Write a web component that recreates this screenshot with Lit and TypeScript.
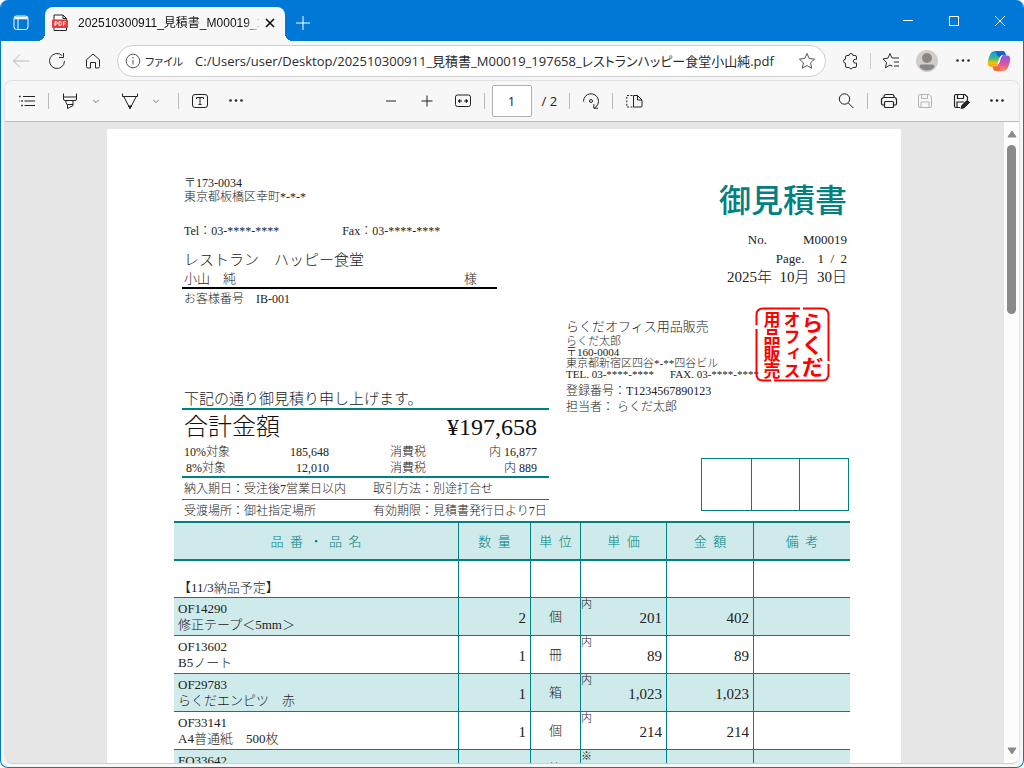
import { LitElement, html, css, svg, nothing } from "lit";
import { customElement, property } from "lit/decorators.js";

type Row = {
  code: string;
  name: string;
  qty: string;
  unit: string;
  mark: string;
  price: string;
  amount: string;
};

const ROWS: Row[] = [
  { code: "", name: "【11/3納品予定】", qty: "", unit: "", mark: "", price: "", amount: "" },
  { code: "OF14290", name: "修正テープ＜5mm＞", qty: "2", unit: "個", mark: "内", price: "201", amount: "402" },
  { code: "OF13602", name: "B5ノート", qty: "1", unit: "冊", mark: "内", price: "89", amount: "89" },
  { code: "OF29783", name: "らくだエンピツ　赤", qty: "1", unit: "箱", mark: "内", price: "1,023", amount: "1,023" },
  { code: "OF33141", name: "A4普通紙　500枚", qty: "1", unit: "個", mark: "内", price: "214", amount: "214" },
  { code: "FO33642", name: "", qty: "", unit: "箱", mark: "※", price: "", amount: "" },
];

const ICONS: Record<string, unknown> = {
  workspace: svg`<rect x="3" y="3" width="14" height="13.500" rx="2.500"/><path d="M7 6v10.500"/><path d="M3.500 5h13" stroke-width="2.500"/>`,
  plus: svg`<path d="M10 3v14M3 10h14"/>`,
  close: svg`<path d="M6 6l8 8M14 6l-8 8" stroke-width="1.600"/>`,
  winMin: svg`<path d="M5 9.500h10"/>`,
  winMax: svg`<rect x="5.500" y="5.500" width="9" height="9"/>`,
  winClose: svg`<path d="M5 5l10 10M15 5L5 15"/>`,
  back: svg`<path d="M18 10H2.500M9 3.500L2.500 10l6.500 6.500"/>`,
  reload: svg`<path d="M17.500 10a7.500 7.500 0 1 1-2.300-5.400"/><path d="M16.500 2v4.500H12"/>`,
  home: svg`<path d="M3.500 8.700L10 3l6.500 5.700v6.800a1.500 1.500 0 0 1-1.500 1.500h-2.500v-5.500h-5V17H5a1.500 1.500 0 0 1-1.500-1.500z"/>`,
  info: svg`<circle cx="10" cy="10" r="6.800"/><path d="M10 9v4.500"/><path d="M10 6v1.500"/>`,
  star: svg`<path d="M10 2.500l2.200 5 5.400.6-4 3.700 1.100 5.400L10 14.500l-4.700 2.700 1.100-5.400-4-3.700 5.400-.6z"/>`,
  puzzle: svg`<path d="M7 4.500h2a2 2 0 0 1 4 0h2a1.500 1.500 0 0 1 1.500 1.500v2.300h-1.200a1.900 1.900 0 0 0 0 3.800h1.200v2.900a1.500 1.500 0 0 1-1.500 1.500h-2.200a1.900 1.900 0 0 1-3.600 0H7A1.500 1.500 0 0 1 5.500 15v-2.800a2 2 0 1 1 0-4V6A1.500 1.500 0 0 1 7 4.500z"/>`,
  favs: svg`<path d="M11.500 15.200L9 14l-4.500 2.800 1-5.300-3.500-3.600 5-.8L9 2.500l2 4.500h7"/><path d="M13 11h5M13 15h5"/>`,
  list: svg`<path d="M6 5.500h12M7.500 10H18M7.500 14.500H18" stroke-width="1.200"/><path d="M2 5.500h1.600M4.200 10h1.600M4.200 14.500h1.600M2 10h.5" stroke-width="1.600"/>`,
  highlighter: svg`<path d="M3.500 2.500v5.500q0 1.500 1.500 1.500h10q1.500 0 1.500-1.500V2.500M3.500 6h13M6 9.500v2.300L7.500 14v3.500L13 14.500V9.500M7.500 13.500H13"/>`,
  pen: svg`<path d="M2.500 2.500v3h15v-3M3.700 5.500L10 17.500l6.300-12"/><path d="M8.500 15h3L10 17.500z" fill="currentColor"/>`,
  chevron: svg`<path d="M6.500 8.500L10 12l3.500-3.500"/>`,
  textbox: svg`<rect x="2.500" y="3.500" width="15" height="13" rx="2.500"/><path d="M6.500 8V6.500h7V8M10 6.500v7M8.500 13.500h3"/>`,
  dots: svg`<g fill="currentColor" stroke="none"><circle cx="4.500" cy="9.500" r="1.300"/><circle cx="10" cy="9.500" r="1.300"/><circle cx="15.500" cy="9.500" r="1.300"/></g>`,
  minus: svg`<path d="M5 10h10" stroke-width="1.200"/>`,
  zoomIn: svg`<path d="M4.500 10h11M10 4.500v11"/>`,
  fit: svg`<rect x="2.500" y="4" width="15" height="11.500" rx="2"/><path d="M9 10H5.500M11 10h3.500"/><path d="M7 8L5 10l2 2zM13 8l2 2-2 2z" fill="currentColor" stroke-width=".5"/>`,
  rotate: svg`<path d="M2.500 10.500a7.500 7.500 0 1 1 10.800 6.500"/><path d="M17 17.200h-4.200v-4"/><circle cx="10" cy="10" r="1.500"/>`,
  pages: svg`<path d="M8.500 4.500H2.800v11.500h5.700" stroke-dasharray="2 1.500"/><path d="M9.500 4.500h4L18 9v6a1 1 0 0 1-1 1H9.500zM13.500 4.500V9H18"/>`,
  search: svg`<circle cx="8.500" cy="8" r="5.200"/><path d="M12.300 12l5 5"/>`,
  print: svg`<path d="M5 6.500v-1a2 2 0 0 1 2-2h6a2 2 0 0 1 2 2v1M5.500 14H4a1.500 1.500 0 0 1-1.500-1.500V9A2.500 2.500 0 0 1 5 6.500h10A2.500 2.500 0 0 1 17.500 9v3.500A1.500 1.500 0 0 1 16 14h-1.500" stroke-width="1.200"/><rect x="5.500" y="10.500" width="9" height="6" rx="1" stroke-width="1.200"/>`,
  save: svg`<path d="M3.500 5A1.500 1.500 0 0 1 5 3.500h9l2.500 2.500v9A1.500 1.500 0 0 1 15 16.500H5A1.500 1.500 0 0 1 3.500 15zM6.500 3.500V7.500h6V3.500M6 16.500V11h8v5.500"/>`,
  saveAs: svg`<path d="M9 16.500H5A1.500 1.500 0 0 1 3.500 15V5A1.500 1.500 0 0 1 5 3.500h9l2.500 2.500v3M6.500 3.500V7.500h6V3.500M6 16.500V11h7" stroke-width="1.200"/><path d="M10 17.500l.8-3 5.400-5.200 2.300 2.200-5.500 5.300z" fill="currentColor"/>`,
};

const icon = (name: string) => html`
  <svg class="icon" viewBox="0 0 20 20" width="20" height="20" aria-hidden="true"
    fill="none" stroke="currentColor" stroke-width="1">${ICONS[name]}</svg>`;

@customElement("browser-chrome")
class BrowserChrome extends LitElement {
  static styles = css`
    :host {
      display: block;
      color: #2b2b2b;
      font-family: "Open Sans", "Noto Sans CJK JP", sans-serif;
    }
    button {
      display: flex;
      align-items: center;
      justify-content: center;
      flex: none;
      width: 36px;
      height: 36px;
      padding: 0;
      border: 0;
      background: none;
      color: inherit;
    }
    .titlebar {
      display: flex;
      height: 41px;
      background: #0078d7;
      color: #fff;
    }
    .titlebar > button { height: 41px; }
    .titlebar .workspace { width: 44px; padding: 4px 4px 0 0; }
    .titlebar .new { width: 36px; padding-top: 4px; }
    .titlebar .win { width: 46px; }
    .spacer { flex: 1; }
    .tab {
      position: relative;
      display: flex;
      align-items: center;
      width: 240px;
      box-sizing: border-box;
      margin-top: 7px;
      padding: 0 4px 2px 7px;
      border-radius: 8px 8px 0 0;
      background: #f7f7f7;
      color: #111;
    }
    .tab::before,
    .tab::after {
      content: "";
      position: absolute;
      bottom: 0;
      width: 8px;
      height: 8px;
    }
    .tab::before {
      right: 100%;
      background: radial-gradient(circle at 0 0, transparent 8px, #f7f7f7 8px);
    }
    .tab::after {
      left: 100%;
      background: radial-gradient(circle at 100% 0, transparent 8px, #f7f7f7 8px);
    }
    .tab-title {
      flex: 1;
      min-width: 0;
      margin-left: 10px;
      white-space: nowrap;
      font-family: "Liberation Sans", "Noto Sans CJK JP", sans-serif;
      font-size: 12px;
      line-height: 20px;
      mask-image: linear-gradient(to right, #000 92%, rgb(0 0 0 / 0.2));
    }
    .tab button { width: 22px; height: 22px; }
    .toolbar {
      display: flex;
      align-items: center;
      height: 39px;
      padding: 0 6px 0 2px;
      background: #f7f7f7;
    }
    .disabled { color: #b8b8b8; }
    .address {
      display: flex;
      align-items: center;
      flex: 1;
      min-width: 0;
      height: 32px;
      box-sizing: border-box;
      margin: 0 6px;
      padding: 0 8px 0 5px;
      border: 1px solid #cfcfcf;
      border-radius: 16px;
      background: #fff;
    }
    .address .icon { flex: none; color: #555; }
    .scheme {
      margin: 0 12px 0 2px;
      font-size: 11px;
      font-feature-settings: "palt";
      white-space: nowrap;
    }
    .url {
      flex: 1;
      min-width: 0;
      padding: 0;
      border: 0;
      outline: 0;
      background: none;
      color: #2b2b2b;
      font: 13px/20px "Open Sans", "Noto Sans CJK JP", sans-serif;
      font-feature-settings: "palt";
    }
    .address button { width: 20px; height: 20px; }
    .sep {
      flex: none;
      width: 1px;
      height: 16px;
      margin: 0 2px;
      background: #ccc;
    }
  `;

  render() {
    return html`
      <div class="titlebar">
        <button class="workspace" aria-label="ワークスペース">${icon("workspace")}</button>
        <div class="tab">
          <svg width="16" height="18" viewBox="0 0 16 18" aria-hidden="true">
            <path d="M2 1h9l3.500 3.500v12H2z" fill="#fff" stroke="#222"/>
            <path d="M11 1v3.500h3.500" fill="none" stroke="#222"/>
            <rect x="0" y="5.500" width="16" height="8.500" rx="1" fill="#e8393c"/>
            <path d="M3 12V7.700h1.300a1.200 1.200 0 0 1 0 2.400H3M7 7.700h.8a1.900 1.900 0 0 1 0 3.800H7zM11.500 12V7.700H14M11.500 9.800h2" fill="none" stroke="#fff" stroke-width="1"/>
          </svg>
          <span class="tab-title">202510300911_見積書_M00019_1</span>
          <button aria-label="タブを閉じる">${icon("close")}</button>
        </div>
        <button class="new" aria-label="新しいタブ">${icon("plus")}</button>
        <span class="spacer"></span>
        <button class="win" aria-label="最小化">${icon("winMin")}</button>
        <button class="win" aria-label="最大化">${icon("winMax")}</button>
        <button class="win" aria-label="閉じる">${icon("winClose")}</button>
      </div>
      <div class="toolbar">
        <button class="disabled" disabled aria-label="戻る">${icon("back")}</button>
        <button aria-label="更新">${icon("reload")}</button>
        <button aria-label="ホーム">${icon("home")}</button>
        <div class="address">
          ${icon("info")}
          <label class="scheme" for="url">ファイル</label>
          <input class="url" id="url" type="text"
            .value=${"C:/Users/user/Desktop/202510300911_見積書_M00019_197658_レストランハッピー食堂小山純.pdf"} />
          <button aria-label="お気に入りに追加">${icon("star")}</button>
        </div>
        <button aria-label="拡張機能">${icon("puzzle")}</button>
        <span class="sep"></span>
        <button aria-label="お気に入り">${icon("favs")}</button>
        <button aria-label="プロファイル">
          <svg width="22" height="22" viewBox="0 0 22 22" aria-hidden="true">
            <circle cx="11" cy="11" r="11" fill="#d0cecb"/>
            <circle cx="11" cy="8" r="5" fill="#8b8683"/>
            <path d="M3.500 16.500Q3.500 14.500 5.500 14.500h11q2 0 2 2Q16 20.500 11 20.500T3.500 16.500z" fill="#8b8683"/>
          </svg>
        </button>
        <button aria-label="設定など">${icon("dots")}</button>
        <button aria-label="Copilot">
          <svg width="24" height="24" viewBox="0 0 24 24" aria-hidden="true">
            <defs>
              <linearGradient id="cl" x1="0" y1="0" x2="0" y2="1">
                <stop offset="0" stop-color="#1493e8"/><stop offset=".45" stop-color="#35b98a"/>
                <stop offset=".75" stop-color="#f3c500"/><stop offset="1" stop-color="#ff9c1a"/>
              </linearGradient>
              <linearGradient id="cr" x1="0" y1="0" x2="0" y2="1">
                <stop offset="0" stop-color="#8b5be8"/><stop offset=".5" stop-color="#d94fa8"/>
                <stop offset="1" stop-color="#ff8a4c"/>
              </linearGradient>
            </defs>
            <path d="M8 2h7.500q2 0 2.700 2l.8 2.500h-3q-2.500 0-3.300 2.500l-2 6.500Q10 17.800 7.500 17.800H4Q.5 17.800.8 13.500 1 10 3.500 4.500 4.700 2 8 2z" fill="url(#cl)"/>
            <path d="M8.500 2h7q2 0 2.700 2l.8 2.500h-3q-2.300 0-3.200 2L10 6z" fill="#1560cf"/>
            <path d="M16 22H9q-2 0-2.700-2l-.8-2.200h2.800q2.300 0 3-2.300l2-6.500q.8-2.500 3.300-2.500H20q3.500 0 3.200 4.300-.3 3.700-2.700 8.700Q19.300 22 16 22z" fill="url(#cr)"/>
            <path d="M5.500 17.800h2.800q2 0 2.800-1.800l2.200 4q-.8 2-2.300 2H9q-2 0-2.700-2z" fill="#f8663a"/>
            <path d="M11.800 14l1.700-5.300q.6-1.900 2-2.200-1.800.3-2.600 2.500l-2 6z" fill="#fff" stroke="#fff"/>
          </svg>
        </button>
      </div>
    `;
  }
}

@customElement("pdf-toolbar")
class PdfToolbar extends LitElement {
  static styles = css`
    :host {
      display: grid;
      grid-template-columns: 1fr auto 1fr;
      align-items: center;
      height: 40px;
      flex: none;
      padding: 0 4px;
      border-bottom: 1px solid #bcbcbc;
      background: #f7f7f7;
      color: #222;
      font: 13px/20px "Open Sans", "Noto Sans CJK JP", sans-serif;
    }
    .group { display: flex; align-items: center; }
    .right { justify-content: flex-end; }
    button {
      display: flex;
      align-items: center;
      justify-content: center;
      width: 36px;
      height: 36px;
      padding: 0;
      border: 0;
      background: none;
      color: inherit;
    }
    .small { width: 16px; margin-right: 8px; color: #555; }
    .disabled { color: #b4b4b4; }
    .sep { width: 1px; height: 16px; margin: 0 3px; background: #bbb; }
    .small + .sep { margin-left: 6px; }
    .page {
      width: 40px;
      height: 32px;
      box-sizing: border-box;
      margin-left: 4px;
      padding: 0;
      border: 1px solid #b0b0b0;
      border-radius: 2px;
      background: #fff;
      color: #222;
      font: inherit;
      text-align: center;
    }
    .total { width: 24px; padding-left: 10px; white-space: nowrap; }
  `;

  render() {
    return html`
      <div class="group">
        <button aria-label="目次">${icon("list")}</button>
        <span class="sep"></span>
        <button aria-label="強調表示">${icon("highlighter")}</button>
        <button class="small" aria-label="強調表示の色">${icon("chevron")}</button>
        <button aria-label="手描き">${icon("pen")}</button>
        <button class="small" aria-label="手描きの設定">${icon("chevron")}</button>
        <span class="sep"></span>
        <button aria-label="テキストの追加">${icon("textbox")}</button>
        <button aria-label="その他">${icon("dots")}</button>
      </div>
      <div class="group">
        <button aria-label="縮小">${icon("minus")}</button>
        <button aria-label="拡大">${icon("zoomIn")}</button>
        <button aria-label="幅に合わせる">${icon("fit")}</button>
        <span class="sep"></span>
        <input class="page" id="page" type="text" value="1" aria-label="ページ番号" />
        <label class="total" for="page">/ 2</label>
        <span class="sep"></span>
        <button aria-label="回転">${icon("rotate")}</button>
        <span class="sep"></span>
        <button aria-label="ページ表示">${icon("pages")}</button>
      </div>
      <div class="group right">
        <button aria-label="検索">${icon("search")}</button>
        <span class="sep"></span>
        <button aria-label="印刷">${icon("print")}</button>
        <button class="disabled" disabled aria-label="上書き保存">${icon("save")}</button>
        <button aria-label="名前を付けて保存">${icon("saveAs")}</button>
        <button aria-label="設定など">${icon("dots")}</button>
      </div>
    `;
  }
}

@customElement("company-seal")
class CompanySeal extends LitElement {
  static styles = css`
    :host {
      display: flex;
      flex-direction: row-reverse;
      align-items: center;
      justify-content: center;
      position: relative;
      width: 75px;
      height: 75px;
      color: #f00;
      font-family: "Noto Sans CJK JP", sans-serif;
      font-weight: 700;
    }
    .frame { position: absolute; inset: 0; }
    .col { writing-mode: vertical-rl; font-size: 17px; line-height: 20px; }
    .big { font-size: 22px; line-height: 22px; }
  `;

  render() {
    return html`
      <svg class="frame" width="75" height="75" viewBox="0 0 75 75" aria-hidden="true"
        fill="none" stroke="#f00" stroke-width="2">
        <path d="M48 1.500h19q6.500 0 6.500 6.500v46M73.500 57v10q0 6.500-6.500 6.500H19M16 73.500H8q-6.500 0-6.500-6.500V22M1.500 18V8q0-6.500 6.500-6.500h37"/>
      </svg>
      <span class="col big">らくだ</span>
      <span class="col">オフィス</span>
      <span class="col">用品販売</span>
    `;
  }
}

@customElement("quote-sheet")
class QuoteSheet extends LitElement {
  @property({ attribute: false }) rows: Row[] = [];

  static styles = css`
    :host {
      display: block;
      box-sizing: border-box;
      width: 794px;
      max-width: 100%;
      margin: 7px auto 0;
      padding: 47px 51px 0 67px;
      background: #fff;
      color: #222;
      font-family: "Liberation Serif", "Noto Sans CJK JP", serif;
      font-size: 12px;
      font-weight: 300;
    }
    p, h1, h2 { margin: 0; font-weight: inherit; white-space: nowrap; }
    .head { display: flex; gap: 17px; }
    .left { width: 367px; margin-left: 8px; }
    .right { display: flex; flex: 1; flex-direction: column; padding: 0 1px 10px 0; }
    .line { padding-left: 2px; line-height: 14px; }
    .phones { display: flex; gap: 63px; margin-top: 20px; }
    .customer {
      margin-top: 12px;
      padding-left: 2px;
      font-size: 15px;
      line-height: 20px;
    }
    .contact {
      display: flex;
      justify-content: space-between;
      width: 293px;
      margin-top: 1px;
      padding: 0 20px 1px 2px;
      border-bottom: 2px solid #000;
      font-size: 13px;
      line-height: 15px;
    }
    .number { display: flex; gap: 12px; margin-top: 3px; }
    .greeting {
      margin-top: 84px;
      padding-left: 2px;
      font-size: 15px;
      line-height: 18px;
    }
    .total {
      padding: 0 12px 0 2px;
      border-top: 2px solid #008080;
      border-bottom: 2px solid #008080;
    }
    .grand {
      display: flex;
      justify-content: space-between;
      font-size: 24px;
      line-height: 34px;
      color: #111;
    }
    .tax {
      display: grid;
      grid-template-columns: 42px 103px 97px 1fr;
      line-height: 16px;
      text-align: right;
      white-space: nowrap;
    }
    .terms {
      display: grid;
      grid-template-columns: 189px 1fr;
      padding: 1px 0 0 2px;
      line-height: 20px;
      white-space: nowrap;
    }
    .terms + .terms { border-top: 1px solid #008080; }
    .title {
      margin-top: 4px;
      padding-right: 2px;
      color: #008080;
      font: 500 32px/36px "Noto Sans CJK JP", sans-serif;
      text-align: right;
    }
    .meta {
      display: flex;
      flex-direction: column;
      align-items: flex-end;
      margin-top: 14px;
      padding-right: 2px;
      font-size: 13px;
      line-height: 19px;
      white-space: nowrap;
    }
    .no { display: flex; gap: 36px; }
    .date { font-size: 15px; }
    .company { position: relative; margin-top: 31px; }
    .company h2 { font-size: 13px; line-height: 18px; }
    .fine { font-size: 11px; line-height: 11px; }
    .tel { display: flex; gap: 16px; }
    .ids { margin-top: 3px; line-height: 16px; }
    .ids + .ids { margin-top: 0; }
    company-seal { position: absolute; top: -11px; right: 19px; }
    .approvals {
      display: grid;
      grid-template-columns: repeat(3, 1fr);
      width: 146px;
      height: 51px;
      margin: auto 0 0 auto;
      border: 1px solid #008080;
    }
    .approvals span + span { border-left: 1px solid #008080; }
    table {
      width: 100%;
      table-layout: fixed;
      border-collapse: separate;
      border-spacing: 0;
      border-top: 2px solid #008080;
      font-size: 13px;
    }
    .c-qty { width: 72px; }
    .c-unit { width: 50px; }
    .c-price { width: 86px; }
    .c-amount { width: 87px; }
    .c-note { width: 97px; }
    th, td { box-sizing: border-box; height: 38px; padding: 0; border-bottom: 1px solid #008080; }
    th + th, td + td { border-left: 1px solid #008080; }
    th {
      padding-bottom: 2px;
      border-bottom-width: 2px;
      background: #cfeaea;
      color: #008080;
      font-weight: 300;
    }
    tr:nth-child(even) td { background: #cfeaea; }
    .item { padding: 0 4px; line-height: 16px; vertical-align: middle; white-space: nowrap; }
    .section td { height: 37px; }
    .section .item { padding-bottom: 1px; vertical-align: bottom; }
    .num { padding: 2px 4px 0 0; font-size: 15px; line-height: 20px; text-align: right; }
    .unit { line-height: 20px; text-align: center; }
    .price { display: flex; justify-content: space-between; height: 37px; padding-right: 4px; }
    .mark { font-size: 11px; line-height: 12px; }
    .value { align-self: center; padding-top: 2px; font-size: 15px; line-height: 20px; }
  `;

  render() {
    return html`
      <div class="head">
        <div class="left">
          <p class="line">〒173-0034</p>
          <p class="line">東京都板橋区幸町*-*-*</p>
          <p class="line phones"><span>Tel：03-****-****</span><span>Fax：03-****-****</span></p>
          <p class="customer">レストラン　ハッピー食堂</p>
          <p class="contact"><span>小山　純</span><span>様</span></p>
          <p class="line number"><span>お客様番号</span><span>IB-001</span></p>
          <p class="greeting">下記の通り御見積り申し上げます。</p>
          <div class="total">
            <div class="grand"><span>合計金額</span><span>¥197,658</span></div>
            <div class="tax"><span>10%対象</span><span>185,648</span><span>消費税</span><span>内 16,877</span></div>
            <div class="tax"><span>8%対象</span><span>12,010</span><span>消費税</span><span>内 889</span></div>
          </div>
          <div class="terms"><span>納入期日：受注後7営業日以内</span><span>取引方法：別途打合せ</span></div>
          <div class="terms"><span>受渡場所：御社指定場所</span><span>有効期限：見積書発行日より7日</span></div>
        </div>
        <div class="right">
          <h1 class="title">御見積書</h1>
          <div class="meta">
            <span class="no"><span>No.</span><span>M00019</span></span>
            <span>Page.&emsp;1&ensp;/&ensp;2</span>
            <span class="date">2025年&ensp;10月&ensp;30日</span>
          </div>
          <div class="company">
            <h2>らくだオフィス用品販売</h2>
            <p class="fine">らくだ太郎</p>
            <p class="fine">〒160-0004</p>
            <p class="fine">東京都新宿区四谷*-**四谷ビル</p>
            <p class="fine tel"><span>TEL. 03-****-****</span><span>FAX. 03-****-****</span></p>
            <p class="ids">登録番号：T1234567890123</p>
            <p class="ids">担当者： らくだ太郎</p>
            <company-seal></company-seal>
          </div>
          <div class="approvals"><span></span><span></span><span></span></div>
        </div>
      </div>
      <table>
        <colgroup>
          <col /><col class="c-qty" /><col class="c-unit" /><col class="c-price" />
          <col class="c-amount" /><col class="c-note" />
        </colgroup>
        <thead>
          <tr>
            <th>品&ensp;番&ensp;・&ensp;品&ensp;名</th>
            <th>数&ensp;量</th>
            <th>単&ensp;位</th>
            <th>単&ensp;価</th>
            <th>金&ensp;額</th>
            <th>備&ensp;考</th>
          </tr>
        </thead>
        <tbody>
          ${this.rows.map(
            (r) => html`
              <tr class=${r.code ? "" : "section"}>
                <td class="item">${r.code ? html`${r.code}<br />` : nothing}${r.name || html`&nbsp;`}</td>
                <td class="num">${r.qty}</td>
                <td class="unit">${r.unit}</td>
                <td>${r.code
                  ? html`<div class="price"><span class="mark">${r.mark}</span><span class="value">${r.price}</span></div>`
                  : nothing}</td>
                <td class="num">${r.amount}</td>
                <td></td>
              </tr>`
          )}
        </tbody>
      </table>
    `;
  }
}

@customElement("app-root")
class AppRoot extends LitElement {
  static styles = css`
    :host {
      display: flex;
      flex-direction: column;
      box-sizing: border-box;
      height: 100vh;
      overflow: hidden;
      border: 1px solid #0078d7;
      border-top: 0;
      border-radius: 8px;
      background: #f7f7f7;
    }
    .panel {
      display: flex;
      flex-direction: column;
      flex: 1;
      min-height: 0;
      margin: 0 3px 3px;
      border: 1px solid #e2e2e2;
      border-bottom-color: #d0d0d0;
      border-radius: 8px;
      overflow: hidden;
    }
    .viewer { display: flex; flex: 1; min-height: 0; background: #e6e6e6; }
    .canvas { flex: 1; min-width: 0; padding-right: 1px; overflow: hidden; }
    .track {
      display: flex;
      flex-direction: column;
      align-items: center;
      width: 15px;
      padding: 8px 0;
      background: #fcfcfc;
    }
    .thumb {
      flex: none;
      width: 9px;
      height: 27%;
      margin: 7px 0 auto;
      border-radius: 5px;
      background: #8a8a8a;
    }
  `;

  render() {
    return html`
      <browser-chrome></browser-chrome>
      <main class="panel">
        <pdf-toolbar></pdf-toolbar>
        <div class="viewer">
          <div class="canvas"><quote-sheet .rows=${ROWS}></quote-sheet></div>
          <div class="track">
            <svg width="10" height="8" viewBox="0 0 10 8" aria-hidden="true"><path d="M5 1l4 6H1z" fill="#8a8a8a" stroke="#8a8a8a" stroke-linejoin="round"/></svg>
            <div class="thumb"></div>
            <svg width="10" height="8" viewBox="0 0 10 8" aria-hidden="true"><path d="M5 7l4-6H1z" fill="#8a8a8a" stroke="#8a8a8a" stroke-linejoin="round"/></svg>
          </div>
        </div>
      </main>
    `;
  }
}
